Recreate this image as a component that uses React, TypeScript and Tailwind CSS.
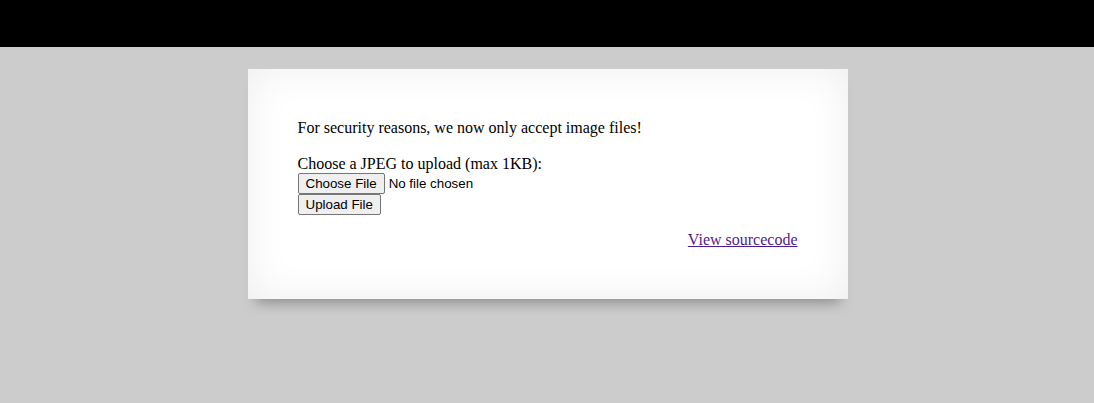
export default function App() {
  const btn =
    "inline-block bg-[#efefef] border border-solid border-[#767676] rounded-[2px] px-[7px] py-[1px] text-[13.33px] leading-[17px] text-black text-left";
  return (
    <div className="min-h-[403px] bg-[#cccccc] text-black text-[16px] leading-[18px] pl-[1px]" style={{ fontFamily: '"Liberation Serif", serif' }}>
      <div className="h-[47px] bg-black -ml-[1px]" />
      <div className="mx-auto mt-[22px] w-[600px] bg-white px-[50px] pt-[50px] pb-[50px] shadow-[inset_0_0_40px_#eeeeee,0_12px_12px_-8px_rgba(0,0,0,0.3)]">
        <div>For security reasons, we now only accept image files!</div>
        <div className="h-[18px]" />
        <div>Choose a JPEG to upload (max 1KB):</div>
        <div className="flex items-center h-[21px]" style={{ fontFamily: '"Liberation Sans", Arial, sans-serif' }}>
          <span className={btn}>Choose File</span>
          <span className="ml-[4px] text-[13.33px] leading-[17px]">No file chosen</span>
        </div>
        <div className="flex items-center h-[21px]" style={{ fontFamily: '"Liberation Sans", Arial, sans-serif' }}>
          <span className={btn}>Upload File</span>
        </div>
        <div className="mt-[16px] text-right">
          <a href="#" className="text-[#551a8b] underline">View sourcecode</a>
        </div>
      </div>
    </div>
  );
}
